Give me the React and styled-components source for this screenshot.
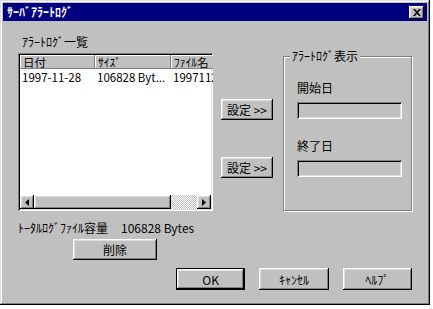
import React from "react";
import styled, { createGlobalStyle } from "styled-components";

const GlobalStyle = createGlobalStyle`
  html, body { margin:0; padding:0; background:#fff; }
  body {
    font-family: "Noto Sans CJK JP", "DejaVu Sans", sans-serif;
    font-size: 12px;
    color: #000;
  }
`;

const raised = `
  box-shadow: inset -1px -1px #000, inset 1px 1px #fff,
    inset -2px -2px #808080, inset 2px 2px #dfdfdf;
`;

const sunken = `
  box-shadow: inset 1px 1px #808080, inset -1px -1px #fff,
    inset 2px 2px #000, inset -2px -2px #dfdfdf;
`;

const Window = styled.div`
  width: 430px;
  height: 305px;
  box-sizing: border-box;
  padding: 3px;
  background: #c0c0c0;
  box-shadow: inset -1px -1px #000, inset 1px 1px #dfdfdf,
    inset -2px -2px #808080, inset 2px 2px #fff;
  display: flex;
  flex-direction: column;
`;

const TitleBar = styled.div`
  height: 18px;
  background: #000080;
  color: #fff;
  font-weight: bold;
  display: flex;
  align-items: center;
  justify-content: space-between;
  padding-left: 4px;
  line-height: 18px;
`;

const CloseBox = styled.div`
  width: 15px;
  height: 13px;
  margin-right: 3px;
  background: #c0c0c0;
  ${raised}
  display: flex;
  align-items: center;
  justify-content: center;
`;

const Content = styled.div`
  padding: 0 15px;
  display: flex;
  flex-direction: column;
`;

const MainRow = styled.div`
  display: flex;
  align-items: flex-start;
  margin-top: 14px;
`;

const LeftCol = styled.div`
  width: 195px;
  display: flex;
  flex-direction: column;
`;

const Caption = styled.div`
  line-height: 14px;
  height: 14px;
  padding-left: ${(p) => p.$indent || 0}px;
  white-space: nowrap;
`;

const ListBox = styled.div`
  margin-top: 4px;
  height: 158px;
  box-sizing: border-box;
  padding: 2px;
  background: #fff;
  ${sunken}
  display: flex;
  flex-direction: column;
  overflow: hidden;
  font-size: 11.5px;
`;

const HeaderRow = styled.div`
  display: flex;
  height: 14px;
  flex-shrink: 0;
`;

const HeaderCell = styled.div`
  flex: 0 0 ${(p) => p.$w}px;
  box-sizing: border-box;
  background: #c0c0c0;
  box-shadow: inset -1px -1px #808080, inset 1px 1px #fff;
  line-height: 14px;
  padding-left: 3px;
  white-space: nowrap;
`;

const Row = styled.div`
  display: flex;
  height: 14px;
  margin-top: 1px;
`;

const Cell = styled.div`
  flex: 0 0 ${(p) => p.$w}px;
  box-sizing: border-box;
  line-height: 14px;
  padding-left: 2px;
  white-space: nowrap;
`;

const Spacer = styled.div`
  flex: 1;
`;

const HScroll = styled.div`
  display: flex;
  height: 14px;
  flex-shrink: 0;
`;

const ArrowBtn = styled.div`
  flex: 0 0 14px;
  background: #c0c0c0;
  ${raised}
  display: flex;
  align-items: center;
  justify-content: center;
`;

const Thumb = styled.div`
  background: #c0c0c0;
  ${raised}
  flex-shrink: 0;
`;

const Track = styled.div`
  flex: 1;
  background: repeating-conic-gradient(#c0c0c0 0% 25%, #fff 0% 50%) 0 0 / 2px 2px;
`;

const MiddleCol = styled.div`
  display: flex;
  flex-direction: column;
  gap: 37px;
  margin-left: 8px;
  padding-top: 64px;
`;

const Button = styled.button`
  width: ${(p) => p.$w}px;
  height: ${(p) => p.$h || 21}px;
  box-sizing: border-box;
  padding: 0;
  border: ${(p) => (p.$default ? "1px solid #000" : "none")};
  background: #c0c0c0;
  ${raised}
  font-family: inherit;
  font-size: 12px;
  color: #000;
  display: flex;
  align-items: center;
  justify-content: center;
  white-space: nowrap;
`;

const Group = styled.fieldset`
  margin: 15px 0 0 10px;
  padding: 0;
  width: 129px;
  height: 161px;
  box-sizing: border-box;
  min-width: 0;
  border: 1px solid #808080;
  box-shadow: inset 1px 1px #fff, 1px 1px #fff;
`;

const GroupLegend = styled.legend`
  margin-left: 6px;
  padding: 0 2px;
  line-height: 12px;
  background: #c0c0c0;
`;

const GroupBody = styled.div`
  padding-left: 13px;
  display: flex;
  flex-direction: column;
`;

const FieldLabel = styled.div`
  line-height: 12px;
  margin-top: ${(p) => p.$top}px;
`;

const DateBox = styled.div`
  width: 105px;
  height: 17px;
  margin-top: 8px;
  background: #c0c0c0;
  ${sunken}
`;

const TotalRow = styled.div`
  display: flex;
  margin-top: 10px;
  line-height: 14px;
  height: 14px;
  white-space: nowrap;
`;

const TotalValue = styled.span`
  margin-left: 13px;
`;

const DeleteRow = styled.div`
  margin-top: 4px;
  padding-left: 55px;
`;

const ButtonRow = styled.div`
  display: flex;
  gap: 14px;
  margin-top: 8px;
  padding-left: 158px;
`;

const LeftArrow = () => (
  <svg width="4" height="7" viewBox="0 0 4 7">
    <polygon points="4,0 0,3.5 4,7" fill="#000" />
  </svg>
);

const RightArrow = () => (
  <svg width="4" height="7" viewBox="0 0 4 7">
    <polygon points="0,0 4,3.5 0,7" fill="#000" />
  </svg>
);

const CloseIcon = () => (
  <svg width="8" height="7" viewBox="0 0 8 7">
    <path d="M0 0h2l2 2.3L6 0h2L5 3.5 8 7H6L4 4.7 2 7H0l3-3.5z" fill="#000" />
  </svg>
);

export default function App() {
  return (
    <>
      <GlobalStyle />
      <Window>
        <TitleBar>
          <span>ｻｰﾊﾞｱﾗｰﾄﾛｸﾞ</span>
          <CloseBox>
            <CloseIcon />
          </CloseBox>
        </TitleBar>
        <Content>
          <MainRow>
            <LeftCol>
              <Caption $indent={4}>ｱﾗｰﾄﾛｸﾞ一覧</Caption>
              <ListBox>
                <HeaderRow>
                  <HeaderCell $w={75}>日付</HeaderCell>
                  <HeaderCell $w={76}>ｻｲｽﾞ</HeaderCell>
                  <HeaderCell $w={60}>ﾌｧｲﾙ名</HeaderCell>
                </HeaderRow>
                <Row>
                  <Cell $w={75}>1997-11-28</Cell>
                  <Cell $w={76}>106828 Byt...</Cell>
                  <Cell $w={60}>19971128.log</Cell>
                </Row>
                <Spacer />
                <HScroll>
                  <ArrowBtn>
                    <LeftArrow />
                  </ArrowBtn>
                  <Thumb style={{ width: 137 }} />
                  <Track />
                  <ArrowBtn>
                    <RightArrow />
                  </ArrowBtn>
                </HScroll>
              </ListBox>
            </LeftCol>
            <MiddleCol>
              <Button $w={52}>設定 &gt;&gt;</Button>
              <Button $w={52}>設定 &gt;&gt;</Button>
            </MiddleCol>
            <Group>
              <GroupLegend>ｱﾗｰﾄﾛｸﾞ表示</GroupLegend>
              <GroupBody>
                <FieldLabel $top={20}>開始日</FieldLabel>
                <DateBox />
                <FieldLabel $top={21}>終了日</FieldLabel>
                <DateBox />
              </GroupBody>
            </Group>
          </MainRow>
          <TotalRow>
            <span>ﾄｰﾀﾙﾛｸﾞﾌｧｲﾙ容量</span>
            <TotalValue>106828 Bytes</TotalValue>
          </TotalRow>
          <DeleteRow>
            <Button $w={84}>削除</Button>
          </DeleteRow>
          <ButtonRow>
            <Button $w={71} $h={22} $default>OK</Button>
            <Button $w={71} $h={22}>ｷｬﾝｾﾙ</Button>
            <Button $w={71} $h={22}>ﾍﾙﾌﾟ</Button>
          </ButtonRow>
        </Content>
      </Window>
    </>
  );
}
